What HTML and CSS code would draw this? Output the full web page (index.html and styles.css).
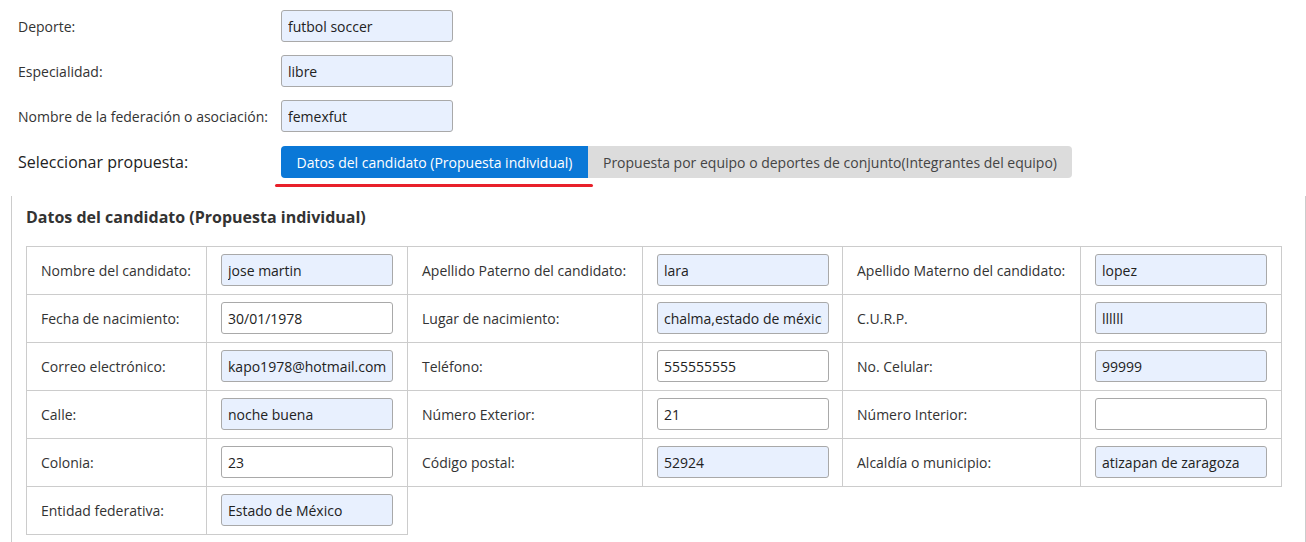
FILE: index.html
```html
<!DOCTYPE html>
<html lang="es">

<head>
    <meta charset="UTF-8">
    <meta name="viewport" content="width=device-width, initial-scale=1.0">
    <title>Propuesta</title>
    <link rel="stylesheet" href="styles.css">
</head>

<body>
    <div class="top-form">
        <div class="row">
            <label class="row-label">Deporte:</label>
            <input type="text" class="input-text filled" value="futbol soccer">
        </div>
        <div class="row">
            <label class="row-label">Especialidad:</label>
            <input type="text" class="input-text filled" value="libre">
        </div>
        <div class="row">
            <label class="row-label">Nombre de la federación o asociación:</label>
            <input type="text" class="input-text filled" value="femexfut">
        </div>
        <div class="row select-row">
            <label class="row-label select-label">Seleccionar propuesta:</label>
            <div class="tabs">
                <button class="tab active" type="button">Datos del candidato (Propuesta individual)</button>
                <button class="tab" type="button">Propuesta por equipo o deportes de conjunto(Integrantes del equipo)</button>
            </div>
        </div>
    </div>

    <div class="panel">
        <h3 class="panel-title">Datos del candidato (Propuesta individual)</h3>
        <table class="data-table">
            <colgroup>
                <col class="c-label1">
                <col class="c-input">
                <col class="c-label2">
                <col class="c-input2">
                <col class="c-label3">
                <col class="c-input">
            </colgroup>
            <tr>
                <td>Nombre del candidato:</td>
                <td><input type="text" class="input-text filled" value="jose martin"></td>
                <td>Apellido Paterno del candidato:</td>
                <td><input type="text" class="input-text filled" value="lara"></td>
                <td>Apellido Materno del candidato:</td>
                <td><input type="text" class="input-text filled" value="lopez"></td>
            </tr>
            <tr>
                <td>Fecha de nacimiento:</td>
                <td><input type="text" class="input-text" value="30/01/1978"></td>
                <td>Lugar de nacimiento:</td>
                <td><input type="text" class="input-text filled" value="chalma,estado de méxico"></td>
                <td>C.U.R.P.</td>
                <td><input type="text" class="input-text filled" value="llllll"></td>
            </tr>
            <tr>
                <td>Correo electrónico:</td>
                <td><input type="text" class="input-text filled" value="kapo1978@hotmail.com"></td>
                <td>Teléfono:</td>
                <td><input type="text" class="input-text" value="555555555"></td>
                <td>No. Celular:</td>
                <td><input type="text" class="input-text filled" value="99999"></td>
            </tr>
            <tr>
                <td>Calle:</td>
                <td><input type="text" class="input-text filled" value="noche buena"></td>
                <td>Número Exterior:</td>
                <td><input type="text" class="input-text" value="21"></td>
                <td>Número Interior:</td>
                <td><input type="text" class="input-text" value=""></td>
            </tr>
            <tr>
                <td>Colonia:</td>
                <td><input type="text" class="input-text" value="23"></td>
                <td>Código postal:</td>
                <td><input type="text" class="input-text filled" value="52924"></td>
                <td>Alcaldía o municipio:</td>
                <td><input type="text" class="input-text filled" value="atizapan de zaragoza"></td>
            </tr>
            <tr>
                <td>Entidad federativa:</td>
                <td><input type="text" class="input-text filled" value="Estado de México"></td>
            </tr>
        </table>
    </div>
</body>

</html>
```

FILE: styles.css
```css
* {
    box-sizing: border-box;
    margin: 0;
}

body {
    font-family: "Open Sans", "Liberation Sans", sans-serif;
    font-size: 14px;
    color: #333;
    background-color: #fff;
}

.top-form {
    padding: 10px 0 0 18px;
}

.row {
    display: flex;
    align-items: center;
    margin-bottom: 13px;
}

.row-label {
    width: 263px;
}

.select-row {
    margin-top: 14px;
    margin-bottom: 0;
}

.select-label {
    font-size: 16px;
    color: #222;
}

.input-text {
    width: 172px;
    height: 32px;
    padding: 0 6px;
    border: 1px solid #a9a9a9;
    border-radius: 3px;
    font-family: "Open Sans", "Liberation Sans", sans-serif;
    font-size: 14px;
    color: #222;
    background-color: #fff;
}

.filled {
    background-color: #e8f0fe;
}

.tabs {
    display: flex;
}

.tab {
    position: relative;
    height: 32px;
    padding: 0 15px;
    border: none;
    font-family: "Open Sans", "Liberation Sans", sans-serif;
    font-size: 14px;
    color: #444;
    background-color: #dcdcdc;
    border-top-right-radius: 4px;
    border-bottom-right-radius: 4px;
}

.tab.active {
    padding: 0 15.5px;
    color: #fff;
    background-color: #0a78d7;
    border-radius: 4px 0 0 4px;
}

.tab.active::after {
    content: '';
    position: absolute;
    left: -6px;
    right: -5px;
    bottom: -9px;
    height: 3px;
    border-radius: 2px;
    background-color: #e8202a;
}

.panel {
    width: 1295px;
    margin: 18px 0 0 11px;
    padding: 10px 14px 40px;
    border-left: 1px solid #ccc;
    border-right: 1px solid #ccc;
}

.panel-title {
    font-size: 16px;
    font-weight: bold;
    color: #333;
    line-height: 22px;
    margin-bottom: 18px;
}

.data-table {
    width: 1256px;
    table-layout: fixed;
    border-collapse: collapse;
}

.c-label1 {
    width: 180px;
}

.c-input {
    width: 201px;
}

.c-label2 {
    width: 235px;
}

.c-input2 {
    width: 200px;
}

.c-label3 {
    width: 238px;
}

.data-table td {
    border: 1px solid #ccc;
    padding: 7px 14px 8px;
    vertical-align: middle;
    white-space: nowrap;
}

.data-table td .input-text {
    display: block;
}
```
